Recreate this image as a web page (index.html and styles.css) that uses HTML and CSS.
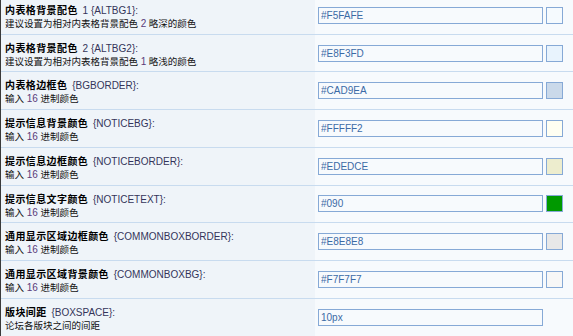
FILE: index.html
```html
<!DOCTYPE html>
<html>
<head>
<meta charset="utf-8">
<link rel="stylesheet" href="styles.css">
</head>
<body>
<div class="table">
  <div class="row">
    <div class="label"><div class="title"><b>内表格背景配色</b> 1 {ALTBG1}:</div><div class="desc">建议设置为相对内表格背景配色 <span class="num">2</span> 略深的颜色</div></div>
    <div class="field"><input class="txt" value="#F5FAFE"><span class="sw" style="background:#F5FAFE"></span></div>
  </div>
  <div class="row">
    <div class="label"><div class="title"><b>内表格背景配色</b> 2 {ALTBG2}:</div><div class="desc">建议设置为相对内表格背景配色 <span class="num">1</span> 略浅的颜色</div></div>
    <div class="field"><input class="txt" value="#E8F3FD"><span class="sw" style="background:#E8F3FD"></span></div>
  </div>
  <div class="row">
    <div class="label"><div class="title"><b>内表格边框色</b> {BGBORDER}:</div><div class="desc">输入 <span class="num">16</span> 进制颜色</div></div>
    <div class="field"><input class="txt" value="#CAD9EA"><span class="sw" style="background:#CAD9EA"></span></div>
  </div>
  <div class="row">
    <div class="label"><div class="title"><b>提示信息背景颜色</b> {NOTICEBG}:</div><div class="desc">输入 <span class="num">16</span> 进制颜色</div></div>
    <div class="field"><input class="txt" value="#FFFFF2"><span class="sw" style="background:#FFFFF2"></span></div>
  </div>
  <div class="row">
    <div class="label"><div class="title"><b>提示信息边框颜色</b> {NOTICEBORDER}:</div><div class="desc">输入 <span class="num">16</span> 进制颜色</div></div>
    <div class="field"><input class="txt" value="#EDEDCE"><span class="sw" style="background:#EDEDCE"></span></div>
  </div>
  <div class="row">
    <div class="label"><div class="title"><b>提示信息文字颜色</b> {NOTICETEXT}:</div><div class="desc">输入 <span class="num">16</span> 进制颜色</div></div>
    <div class="field"><input class="txt" value="#090"><span class="sw" style="background:#090"></span></div>
  </div>
  <div class="row">
    <div class="label"><div class="title"><b>通用显示区域边框颜色</b> {COMMONBOXBORDER}:</div><div class="desc">输入 <span class="num">16</span> 进制颜色</div></div>
    <div class="field"><input class="txt" value="#E8E8E8"><span class="sw" style="background:#E8E8E8"></span></div>
  </div>
  <div class="row">
    <div class="label"><div class="title"><b>通用显示区域背景颜色</b> {COMMONBOXBG}:</div><div class="desc">输入 <span class="num">16</span> 进制颜色</div></div>
    <div class="field"><input class="txt" value="#F7F7F7"><span class="sw" style="background:#F7F7F7"></span></div>
  </div>
  <div class="row last">
    <div class="label"><div class="title"><b>版块间距</b> {BOXSPACE}:</div><div class="desc">论坛各版块之间的间距</div></div>
    <div class="field"><input class="txt" value="10px"></div>
  </div>
</div>
</body>
</html>
```
FILE: styles.css
```css
html, body {
  margin: 0;
  padding: 0;
  background: #f7fafd;
  overflow: hidden;
}
body {
  font-family: "Liberation Sans", "Noto Sans CJK SC", sans-serif;
  font-size: 10px;
  color: #000;
}
.table {
  margin-top: -3px;
  border-left: 1px solid #3a3a3a;
  border-bottom: 1px solid #3a3a3a;
}
.row {
  display: flex;
  height: 37.71px;
  box-sizing: border-box;
  border-bottom: 1px solid #c8dbef;
}
.row.last {
  height: 37px;
  border-bottom: none;
}
.label {
  width: 314px;
  flex: none;
  box-sizing: border-box;
  padding: 6px 0 0 4px;
  background: #eff4f9;
  line-height: 13px;
}
.title {
  color: #34345a;
  white-space: nowrap;
}
.title b {
  color: #000;
  font-family: "Noto Sans CJK SC", sans-serif;
  letter-spacing: 0.4px;
  margin-right: 2px;
}
.desc {
  white-space: nowrap;
  color: #111;
  font-size: 9.5px;
}
.num {
  color: #5a3a7a;
  font-size: 10px;
}
.field {
  flex: 1;
  display: flex;
  align-items: center;
  gap: 3px;
  padding-left: 3px;
  background: #f7fafd;
}
.txt {
  width: 225px;
  height: 17px;
  box-sizing: border-box;
  margin: 0;
  padding: 0 2px;
  border: 1px solid #86a9d6;
  background: #f7fafd;
  font-family: "Liberation Sans", sans-serif;
  font-size: 10px;
  color: #3b6aa6;
  outline: none;
}
.sw {
  width: 17px;
  height: 17px;
  box-sizing: border-box;
  border: 1px solid #86a9d6;
}
```
